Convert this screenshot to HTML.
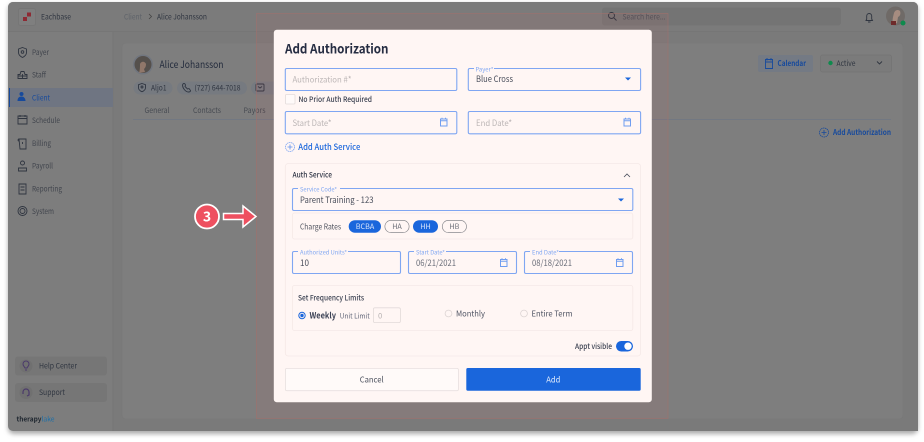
<!DOCTYPE html>
<html><head><meta charset="utf-8"><style>
html,body{margin:0;padding:0;background:#fff;width:924px;height:442px;overflow:hidden}
svg{display:block;filter:blur(.25px)}
text{font-family:"Noto Sans CJK JP","Liberation Sans",sans-serif}
.g{fill:#303641}.i{fill:none;stroke:#2f3540;stroke-width:.9}
.b{fill:none;stroke:#7fa6f2;stroke-width:1.1}
.ph{fill:#bcb6b6;font-size:8.4px}.v{fill:#4a4f5c;font-size:8.800px}
.lb{fill:#7fa6f2;font-size:5.800px}.c{fill:none;stroke:#6f9df0;stroke-width:1}
</style></head><body>
<svg width="924" height="442" viewBox="0 0 924 442" xmlns="http://www.w3.org/2000/svg">
<defs><filter id="sh" x="-5%" y="-5%" width="110%" height="110%"><feGaussianBlur stdDeviation="2.5"/></filter></defs>
<rect x="8" y="4" width="910" height="430" rx="6" fill="#aaa" filter="url(#sh)"/>
<rect x="8" y="2" width="910" height="429" rx="5" fill="#7d7d7d"/>
<path d="M13 2H913a5 5 0 0 1 5 5V31H8V7a5 5 0 0 1 5-5z" fill="#7b7b7b"/>
<rect x="113" y="31" width="805" height="400" fill="#7a7a7a"/>
<line x1="113" y1="31" x2="113" y2="431" stroke="#757575"/>
<line x1="8" y1="31.500" x2="918" y2="31.500" stroke="#767676"/>
<rect x="18.500" y="8.500" width="17" height="17" rx="2" fill="#7f7f7f" stroke="#767676"/>
<rect x="23" y="17" width="4" height="4" fill="#8d2a33"/><rect x="27" y="12.500" width="4" height="4" fill="#8d2a33"/>
<text x="41" y="19.300" font-size="7.600" class="g" textLength="30" lengthAdjust="spacingAndGlyphs">Eachbase</text>
<text x="124" y="19.300" font-size="7.600" fill="#5f636a" textLength="18" lengthAdjust="spacingAndGlyphs">Client</text>
<path d="M149 14l2.500 2.500-2.500 2.500" fill="none" stroke="#444" stroke-width=".8"/>
<text x="157" y="19.300" font-size="7.600" class="g" textLength="50" lengthAdjust="spacingAndGlyphs">Alice Johansson</text>
<rect x="602" y="7.500" width="239" height="18" rx="3" fill="#747474"/>
<circle cx="611.500" cy="15.500" r="3" class="i"/><path d="M614 18l2.500 2.500" class="i"/>
<text x="622.500" y="19.300" font-size="7.600" fill="#4d5159" textLength="43" lengthAdjust="spacingAndGlyphs">Search here...</text>
<path d="M866 20.500h6.500l-.8-1.500v-3a2.500 2.500 0 0 0-5 0v3zM868 22h2.500" class="i"/>
<circle cx="895.500" cy="16" r="9.500" fill="#6f6a67"/><path d="M893 25c-1-5 0-8 1-12 1-3 4-4 6-2 1 3 0 5-2 6l-1 6z" fill="#a68c80"/><rect x="891" y="21" width="5" height="4" fill="#6e2a2a"/>
<circle cx="903" cy="23" r="2.500" fill="#0e8a4d"/>

<!-- sidebar -->
<rect x="9" y="88" width="104" height="19" fill="#6f7582"/><rect x="9" y="88" width="1" height="19" fill="#174a9c"/>
<g class="i">
<path d="M22.500 47.500l4 1.500v3.500c0 2.500-2 4-4 5-2-1-4-2.500-4-5V49z"/><circle cx="22.500" cy="52" r="1.300"/>
<path d="M18 78.500v-4h2l1-3h3l1 3h2v4zM22.500 74v4.500M18 76h9"/>
<path d="M18 116h9v8h-9zM18 118.500h9M20 115v2M25 115v2"/>
<path d="M19 139h7v10h-6zM19 139c-1 0-1.500 2 0 2M22.500 142v2"/>
<circle cx="22.500" cy="163" r="2"/><path d="M18.500 171v-3h8v3z"/>
<path d="M19 184h7v10h-7zM20.500 187h4M20.500 190h4"/>
<circle cx="22.500" cy="211" r="4.500"/><circle cx="22.500" cy="211" r="2.500"/>
</g>
<circle cx="21.500" cy="94" r="2" fill="#174a9c"/><path d="M17.500 101c0-3 1.500-4.500 4-4.500s4 2 4 4.500z" fill="#174a9c"/>
<g font-size="7.600" fill="#41454d">
<text x="32" y="55" textLength="17" lengthAdjust="spacingAndGlyphs">Payer</text>
<text x="32" y="77.500" textLength="14" lengthAdjust="spacingAndGlyphs">Staff</text>
<text x="32" y="100.300" fill="#174a9c" textLength="18" lengthAdjust="spacingAndGlyphs">Client</text>
<text x="32" y="123" textLength="28" lengthAdjust="spacingAndGlyphs">Schedule</text>
<text x="32" y="145.800" textLength="19" lengthAdjust="spacingAndGlyphs">Billing</text>
<text x="32" y="168.500" textLength="21" lengthAdjust="spacingAndGlyphs">Payroll</text>
<text x="32" y="191.300" textLength="30" lengthAdjust="spacingAndGlyphs">Reporting</text>
<text x="32" y="214" textLength="22" lengthAdjust="spacingAndGlyphs">System</text>
</g>
<rect x="15" y="356.500" width="92" height="19" rx="3" fill="#767676"/>
<rect x="15" y="383" width="92" height="19" rx="3" fill="#767676"/>
<circle cx="26" cy="366" r="6.500" fill="#707070"/><circle cx="26" cy="392.500" r="6.500" fill="#707070"/>
<path d="M23 364a3 3 0 0 1 6 0c0 2-1.500 2.500-2 4h-2c-.5-1.500-2-2-2-4zM25 370h2" fill="none" stroke="#4b3a6b"/>
<path d="M23 394v-2a3 3 0 0 1 6 0v3l-2 1" fill="none" stroke="#4b3a6b" stroke-width="1.200"/>
<text x="39" y="368.600" font-size="7.600" class="g" textLength="38" lengthAdjust="spacingAndGlyphs">Help Center</text>
<text x="39" y="395" font-size="7.600" class="g" textLength="26" lengthAdjust="spacingAndGlyphs">Support</text>
<text x="16.500" y="421.500" font-size="7" font-weight="700" fill="#1f2730" textLength="25" lengthAdjust="spacingAndGlyphs">therapy</text>
<text x="41.500" y="421.500" font-size="7" fill="#1c6fa8" textLength="13" lengthAdjust="spacingAndGlyphs">lake</text>

<!-- content -->
<rect x="122" y="43" width="781" height="376" rx="4" fill="#7e7e7e" stroke="#787878" stroke-width=".6"/>
<circle cx="143" cy="64.500" r="10" fill="#71767f"/><circle cx="143" cy="64.500" r="8.500" fill="#55504c"/><path d="M139 73c1-3 1-6 1-9 1-3 5-3 6 0 0 3-1 4-2 5l1 3z" fill="#90776a"/>
<text x="159.500" y="68" font-size="9.800" fill="#232b3c" textLength="64" lengthAdjust="spacingAndGlyphs">Alice Johansson</text>
<rect x="133.500" y="81.500" width="39" height="13" rx="6.500" fill="#767a80"/>
<rect x="177" y="81.500" width="70" height="13" rx="6.500" fill="#767a80"/>
<rect x="251" y="81.500" width="30" height="13" rx="6.500" fill="#767a80"/>
<path d="M142 83.500l3.500 1.200v3c0 2-1.700 3.200-3.500 4-1.800-.8-3.500-2-3.500-4v-3z" class="i"/><circle cx="142" cy="87" r="1" class="i"/>
<path d="M183 84c1-1 2-.5 2.500 1l-.5 1.500 2.500 2.500 1.500-.5 1.500 2c0 1-1 1.500-2 1.500-3 0-6-4-6-7z" class="i"/>
<rect x="256" y="84" width="8" height="7" rx="1" class="i"/><path d="M258 86.500l2 1.500 2-1.500" class="i"/>
<text x="151" y="90.400" font-size="7.600" class="g" textLength="15.500" lengthAdjust="spacingAndGlyphs">Aljo1</text>
<text x="194.500" y="90.400" font-size="7.600" class="g" textLength="46" lengthAdjust="spacingAndGlyphs">(727) 644-7018</text>
<g font-size="7.600" fill="#474b52">
<text x="144.500" y="113" textLength="25" lengthAdjust="spacingAndGlyphs">General</text>
<text x="193" y="113" textLength="28" lengthAdjust="spacingAndGlyphs">Contacts</text>
<text x="243.500" y="113" textLength="22" lengthAdjust="spacingAndGlyphs">Payors</text>
</g>
<line x1="133" y1="119.500" x2="891" y2="119.500" stroke="#6f7784" stroke-width=".7"/>
<rect x="758" y="55" width="55" height="17" rx="2" fill="#747a84"/>
<rect x="820.500" y="55" width="71" height="17" rx="2" fill="#7b7b7b" stroke="#737373" stroke-width=".7"/>
<path d="M765.500 59.500h7v9h-7zM765.500 62h7M767 58v2.500M771 58v2.500" fill="none" stroke="#174a9c" stroke-width=".9"/>
<text x="777.500" y="65.800" font-size="7.600" font-weight="700" fill="#174a9c" textLength="28.500" lengthAdjust="spacingAndGlyphs">Calendar</text>
<circle cx="830.500" cy="63" r="2.200" fill="#0e8a4d"/>
<text x="836.500" y="66" font-size="7.600" class="g" textLength="19" lengthAdjust="spacingAndGlyphs">Active</text>
<path d="M877 61.500l2.500 2.500 2.500-2.500" class="i"/>
<circle cx="824" cy="132.500" r="4.500" fill="none" stroke="#174a9c" stroke-width=".8" stroke-dasharray="1.500 .5"/><path d="M824 130v5M821.500 132.500h5" stroke="#174a9c" stroke-width=".8"/>
<text x="833" y="135.200" font-size="7.600" font-weight="700" fill="#174a9c" textLength="58" lengthAdjust="spacingAndGlyphs">Add Authorization</text>

<!-- overlay -->
<rect x="256.500" y="13.500" width="411.500" height="405" fill="#ff5a50" fill-opacity=".06" stroke="#a0716d" stroke-width=".6"/>

<!-- callout -->
<circle cx="207" cy="216.500" r="12" fill="#ee5060" stroke="#fff" stroke-width="1.800"/>
<text x="207" y="221.500" font-size="14" font-weight="700" fill="#fff" text-anchor="middle">3</text>
<path d="M223.500 213.500H243V206l13 10.500L243 227v-7.500H223.500z" fill="#ee5060" stroke="#fff" stroke-width="1.500"/>

<!-- modal -->
<rect x="273.800" y="29.700" width="378" height="372.500" rx="3" fill="#fff6f4"/>
<text x="285" y="53.500" font-size="13" font-weight="700" fill="#262d42" textLength="103.500" lengthAdjust="spacingAndGlyphs">Add Authorization</text>

<rect x="285.300" y="68.500" width="171.500" height="22" rx="1.500" class="b"/>
<text x="292.500" y="82.500" class="ph" textLength="59" lengthAdjust="spacingAndGlyphs">Authorization #*</text>
<rect x="468.300" y="68.500" width="172.300" height="22" rx="1.500" class="b"/>
<rect x="474" y="66" width="20" height="4" fill="#fff6f4"/>
<text x="475.500" y="71.500" class="lb" textLength="18" lengthAdjust="spacingAndGlyphs">Payer*</text>
<text x="476" y="82" class="v" textLength="37" lengthAdjust="spacingAndGlyphs">Blue Cross</text>
<path d="M625 77.500h6l-3 3z" fill="#1a66dc"/>

<rect x="285.500" y="94.500" width="9.500" height="9.500" rx="1" fill="#fffaf9" stroke="#e3dbda" stroke-width=".8"/>
<text x="298.500" y="101.800" font-size="7.500" font-weight="500" fill="#3a4050" textLength="73.500" lengthAdjust="spacingAndGlyphs">No Prior Auth Required</text>

<rect x="285.300" y="111.500" width="171.500" height="22.300" rx="1.500" class="b"/>
<text x="292.500" y="126" class="ph" textLength="39" lengthAdjust="spacingAndGlyphs">Start Date*</text>
<rect x="468.300" y="111.500" width="172.300" height="22.300" rx="1.500" class="b"/>
<text x="476" y="126" class="ph" textLength="36" lengthAdjust="spacingAndGlyphs">End Date*</text>
<g class="c"><path d="M440.500 119h6.500v7h-6.500zM440.500 120.800h6.500"/><path d="M442 117.800v1.500M445.500 117.800v1.500"/><path d="M624 119h6.500v7H624zM624 120.800h6.500"/><path d="M625.500 117.800v1.500M629 117.800v1.500"/></g>

<circle cx="290" cy="147" r="4.500" fill="none" stroke="#7fa6f2" stroke-width=".8" stroke-dasharray="1.500 .5"/><path d="M290 144.500v5M287.500 147h5" stroke="#5d8fee" stroke-width=".8"/>
<text x="298.300" y="150" font-size="8.400" font-weight="500" fill="#1a66dc" textLength="62" lengthAdjust="spacingAndGlyphs">Add Auth Service</text>

<rect x="285.300" y="163.500" width="355.300" height="192.500" rx="3" fill="#fff6f4" stroke="#f5e9e7" stroke-width=".8"/>
<text x="292.500" y="177.500" font-size="7.500" font-weight="500" fill="#2f3545" textLength="39.500" lengthAdjust="spacingAndGlyphs">Auth Service</text>
<path d="M624 177l3-3 3 3" fill="none" stroke="#4a4f5c" stroke-width=".8"/>

<rect x="292.500" y="188.500" width="340.300" height="22" rx="1.500" class="b"/>
<rect x="298" y="186" width="42" height="4" fill="#fff6f4"/>
<text x="300" y="191.500" class="lb" textLength="37" lengthAdjust="spacingAndGlyphs">Service Code*</text>
<text x="300" y="203" class="v" textLength="73.500" lengthAdjust="spacingAndGlyphs">Parent Training - 123</text>
<path d="M618 198.500h6l-3 3z" fill="#1a66dc"/>

<rect x="292.500" y="213" width="340.300" height="26" rx="2" fill="#fff6f4" stroke="#f5e9e7" stroke-width=".8"/>
<text x="300" y="229.500" font-size="7.800" fill="#50545f" textLength="41" lengthAdjust="spacingAndGlyphs">Charge Rates</text>
<rect x="348.700" y="220.200" width="32.300" height="12.500" rx="6.200" fill="#1a66dc"/>
<rect x="384.900" y="220.400" width="24.200" height="12.200" rx="6.100" fill="#fff6f4" stroke="#8a8a8f" stroke-width=".7"/>
<rect x="413" y="220.200" width="25" height="12.500" rx="6.200" fill="#1a66dc"/>
<rect x="442.300" y="220.400" width="24.200" height="12.200" rx="6.100" fill="#fff6f4" stroke="#8a8a8f" stroke-width=".7"/>
<g font-size="7.200" text-anchor="middle">
<text x="365" y="229.200" fill="#dbe6fb">BCBA</text><text x="397" y="229.200" fill="#6c6f78">HA</text>
<text x="425.500" y="229.200" fill="#dbe6fb">HH</text><text x="454.400" y="229.200" fill="#6c6f78">HB</text></g>

<rect x="292.500" y="251.500" width="108" height="22" rx="1.500" class="b"/>
<rect x="408.500" y="251.500" width="108" height="22" rx="1.500" class="b"/>
<rect x="524.500" y="251.500" width="108" height="22" rx="1.500" class="b"/>
<rect x="298" y="250" width="50" height="4" fill="#fff6f4"/><rect x="414" y="250" width="32" height="4" fill="#fff6f4"/><rect x="530" y="250" width="29" height="4" fill="#fff6f4"/>
<text x="300" y="254.500" class="lb" textLength="47" lengthAdjust="spacingAndGlyphs">Authorized Units*</text>
<text x="416" y="254.500" class="lb" textLength="29" lengthAdjust="spacingAndGlyphs">Start Date*</text>
<text x="532" y="254.500" class="lb" textLength="27" lengthAdjust="spacingAndGlyphs">End Date*</text>
<text x="300" y="266" class="v" textLength="9" lengthAdjust="spacingAndGlyphs">10</text>
<text x="416" y="266" font-size="8.600" fill="#6b6f7a" textLength="40" lengthAdjust="spacingAndGlyphs">06/21/2021</text>
<text x="532" y="266" font-size="8.600" fill="#6b6f7a" textLength="40" lengthAdjust="spacingAndGlyphs">08/18/2021</text>
<g class="c"><path d="M500.500 259.500h6.500v7h-6.500zM500.500 261.300h6.500"/><path d="M502 258.300v1.500M505.500 258.300v1.500"/><path d="M616.500 259.500h6.500v7h-6.500zM616.500 261.300h6.500"/><path d="M618 258.300v1.500M621.500 258.300v1.500"/></g>

<rect x="292.500" y="285.500" width="340.300" height="45" rx="2" fill="#fff6f4" stroke="#f5e9e7" stroke-width=".8"/>
<text x="298" y="300.300" font-size="7.500" font-weight="500" fill="#3a4050" textLength="66" lengthAdjust="spacingAndGlyphs">Set Frequency Limits</text>
<circle cx="302" cy="315.500" r="3.200" fill="none" stroke="#1a66dc" stroke-width="1"/><circle cx="302" cy="315.500" r="1.700" fill="#1a66dc"/>
<text x="309.500" y="318.500" font-size="8.400" font-weight="700" fill="#3d4356" textLength="26.500" lengthAdjust="spacingAndGlyphs">Weekly</text>
<text x="339.700" y="318.300" font-size="7.400" fill="#64687a" textLength="30" lengthAdjust="spacingAndGlyphs">Unit Limit</text>
<rect x="373.400" y="307.800" width="27" height="14.800" rx="1.500" fill="#fff6f4" stroke="#e2dad9" stroke-width=".8"/>
<text x="378" y="318.300" font-size="7.800" fill="#b8b3b3">0</text>
<circle cx="448.500" cy="313.500" r="3.400" fill="none" stroke="#dcd4d3" stroke-width=".8"/>
<text x="456" y="316.500" font-size="8.200" fill="#4f5463" textLength="29" lengthAdjust="spacingAndGlyphs">Monthly</text>
<circle cx="524" cy="313.500" r="3.400" fill="none" stroke="#dcd4d3" stroke-width=".8"/>
<text x="531.500" y="316.500" font-size="8.200" fill="#4f5463" textLength="41" lengthAdjust="spacingAndGlyphs">Entire Term</text>

<text x="575" y="349" font-size="7.500" font-weight="500" fill="#3a4050" textLength="37" lengthAdjust="spacingAndGlyphs">Appt visible</text>
<rect x="616" y="341" width="17" height="10.500" rx="5.200" fill="#1a66dc"/><circle cx="628" cy="346.200" r="3.700" fill="#fff"/>

<rect x="285.400" y="368.400" width="173" height="22.300" rx="1.500" fill="#fffaf9" stroke="#e8e0df" stroke-width=".8"/>
<text x="371.700" y="382.300" font-size="8.200" fill="#4a4f5c" text-anchor="middle" textLength="24" lengthAdjust="spacingAndGlyphs">Cancel</text>
<rect x="466.300" y="368" width="174.400" height="22.800" rx="1.500" fill="#1a66dc"/>
<text x="553.300" y="382.300" font-size="8.200" fill="#e4edfc" text-anchor="middle" textLength="14" lengthAdjust="spacingAndGlyphs">Add</text>
</svg>
</body></html>
